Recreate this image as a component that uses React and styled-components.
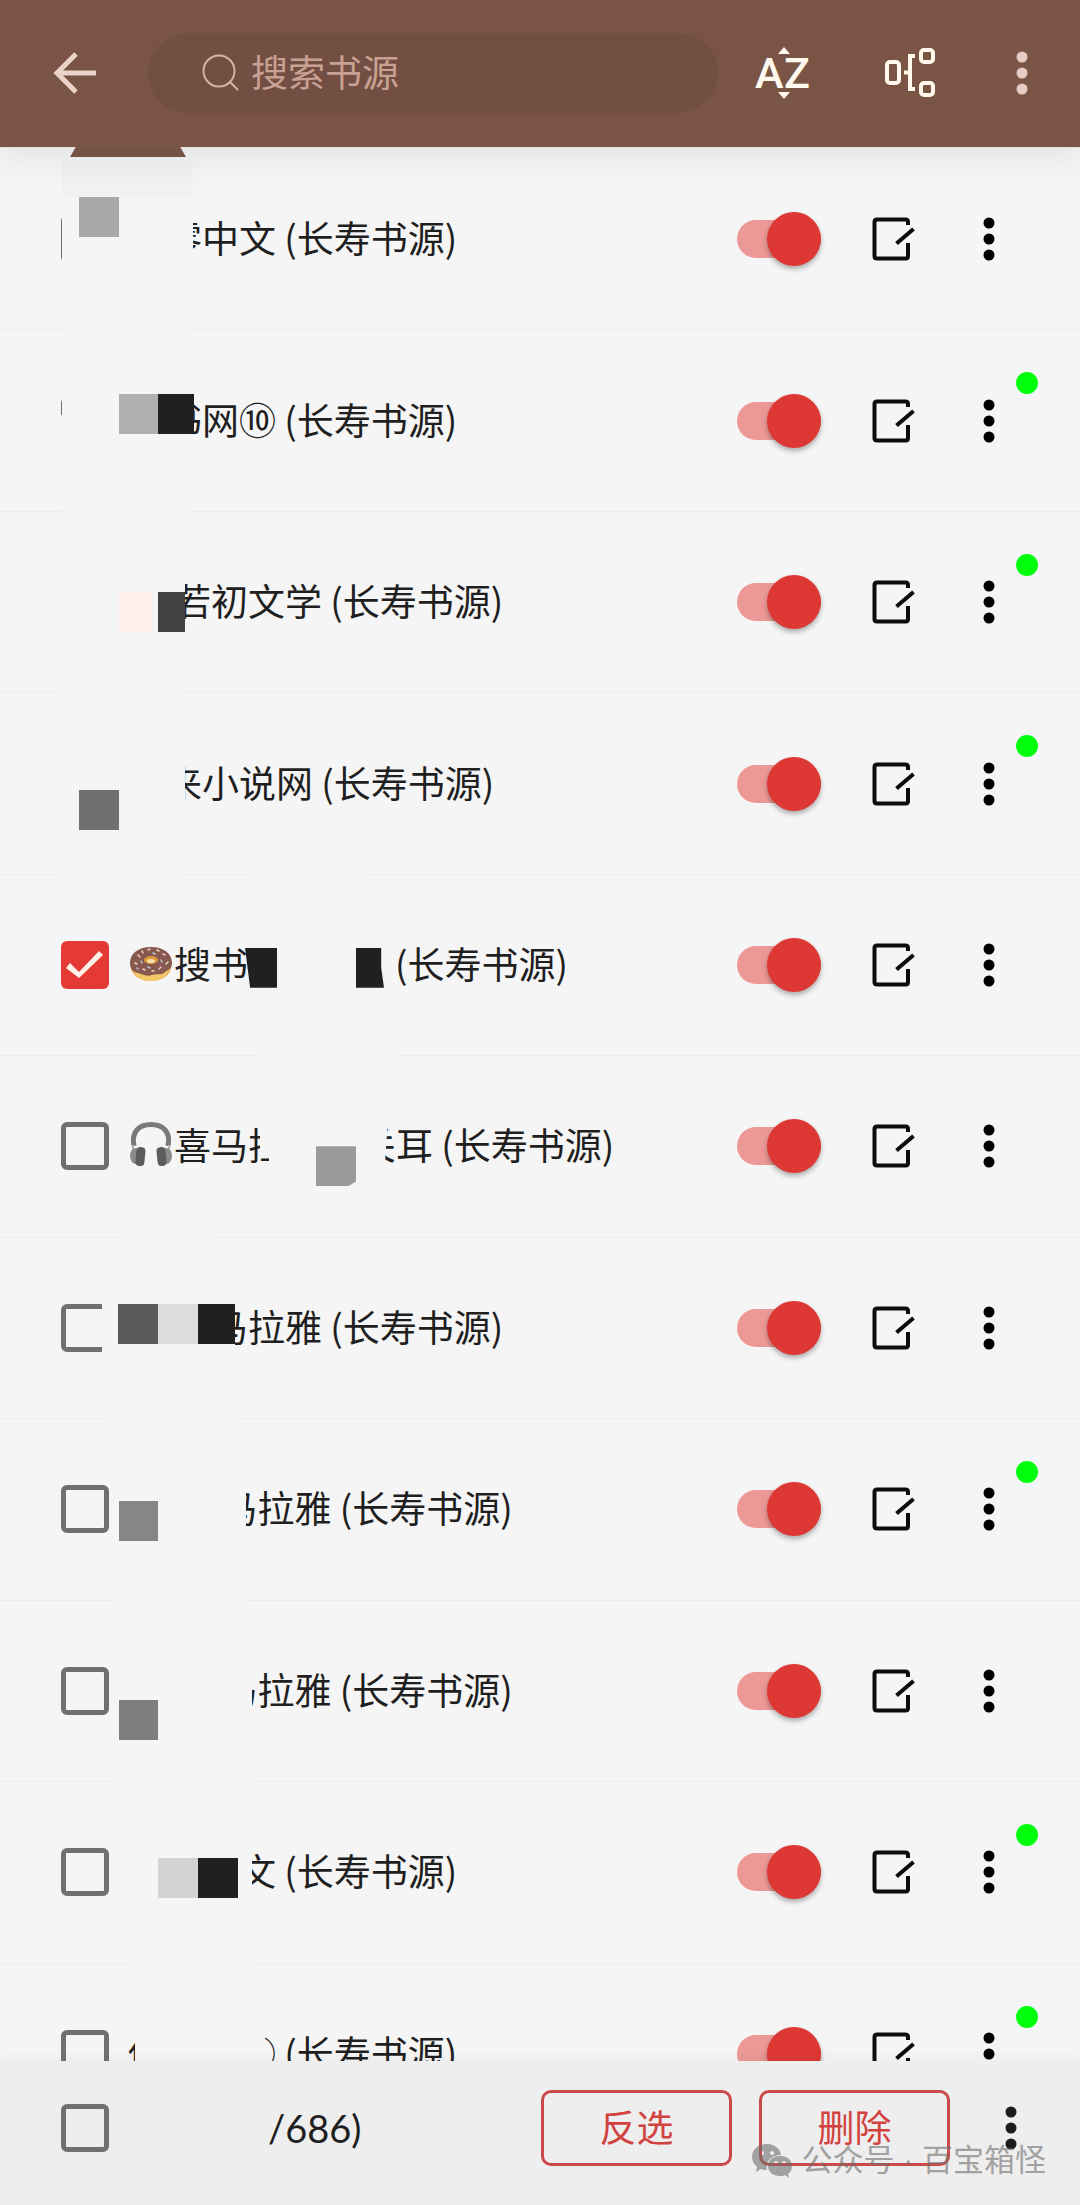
import React from "react";
import styled, { createGlobalStyle } from "styled-components";

const SUFFIX = " (长寿书源)";

// Masked characters are kept as blank spaces so the rest of the name keeps its place.
const sources = [
  {
    id: 1,
    name: "\u3000零中文",
    covers: [
      { x: 62, y: 11, w: 131, h: 37, color: "#f1f1f0" },
      { x: 62, y: 48, w: 131, h: 133 },
      { x: 79, y: 48, w: 40, h: 40, color: "#a9a9a9" },
    ],
  },
  {
    id: 2,
    name: "\u3000书网⑩",
    online: true,
    covers: [
      { x: 62, y: 1, w: 131, h: 181 },
      { x: 60, y: 85, w: 4, h: 40 },
      { x: 119, y: 64, w: 39, h: 40, color: "#b0b0b0" },
      { x: 158, y: 64, w: 36, h: 40, color: "#202020" },
    ],
  },
  {
    id: 3,
    icon: "blank",
    name: "若初文学",
    online: true,
    covers: [
      { x: 57, y: 1, w: 128, h: 181 },
      { x: 119, y: 80, w: 34, h: 40, color: "#fff0ea" },
      { x: 158, y: 80, w: 27, h: 40, color: "#444142" },
    ],
  },
  {
    id: 4,
    name: "\u3000来小说网",
    online: true,
    covers: [
      { x: 57, y: 1, w: 128, h: 181 },
      { x: 79, y: 97, w: 40, h: 40, color: "#707070" },
      { x: 253, y: 170, w: 116, h: 12 },
    ],
  },
  {
    id: 5,
    icon: "donut",
    name: "搜书\u3000\u3000\u3000\u2002\u2005",
    checked: true,
    covers: [
      { x: 256, y: 170, w: 144, h: 12 },
      { x: 245, y: 73, w: 32, h: 40, color: "#202020", clip: "0 0, 100% 0, 100% 100%, 16% 100%" },
      { x: 356, y: 73, w: 28, h: 40, color: "#202020", clip: "0 0, 90% 0, 90% 50%, 100% 100%, 0 100%" },
    ],
  },
  {
    id: 6,
    icon: "headphones",
    name: "喜马拉\u3000\u3000关耳",
    covers: [
      { x: 260, y: 50, w: 129, h: 90, clip: "0 0, 100% 0, 95% 100%, 7% 100%, 7% 56%, 0 56%" },
      { x: 316, y: 90, w: 40, h: 40, color: "#9a9a9a", clip: "0 0, 100% 0, 100% 88%, 80% 100%, 0 100%" },
      { x: 123, y: 170, w: 92, h: 12 },
    ],
  },
  {
    id: 7,
    icon: "blank",
    name: "喜马拉雅",
    covers: [
      { x: 102, y: 1, w: 133, h: 181 },
      { x: 118, y: 66, w: 40, h: 40, color: "#5a5a5a" },
      { x: 158, y: 66, w: 40, h: 40, color: "#dcdcdc" },
      { x: 198, y: 66, w: 37, h: 40, color: "#202020" },
    ],
  },
  {
    id: 8,
    name: "\u3000\u2002喜马拉雅",
    online: true,
    covers: [
      { x: 111, y: 1, w: 135, h: 181 },
      { x: 119, y: 82, w: 39, h: 40, color: "#868686" },
    ],
  },
  {
    id: 9,
    name: "\u3000\u2002喜马拉雅",
    covers: [
      { x: 112, y: 1, w: 140, h: 181 },
      { x: 119, y: 99, w: 39, h: 40, color: "#7e7e7e" },
    ],
  },
  {
    id: 10,
    name: "\u3000\u3000\u3000文",
    online: true,
    covers: [
      { x: 127, y: 1, w: 125, h: 181 },
      { x: 158, y: 76, w: 40, h: 40, color: "#d3d3d3" },
      { x: 198, y: 76, w: 40, h: 40, color: "#202020" },
    ],
  },
  {
    id: 11,
    name: "他\u3000\u3000①",
    online: true,
    covers: [{ x: 135, y: 1, w: 130, h: 97 }],
  },
];

const BackIcon = () => (
  <svg width="64" height="64" viewBox="0 0 64 64" fill="none" stroke="#ecd3c9" strokeWidth="5">
    <path d="M33 13 L14 32 L33 51 M14 32 H53" />
  </svg>
);

const SearchIcon = () => (
  <svg width="38" height="38" viewBox="0 0 38 38" fill="none" stroke="#d8b3a5" strokeWidth="2">
    <circle cx="17" cy="17" r="15.5" />
    <path d="M28 28 L36 36" />
  </svg>
);

const SortIcon = () => (
  <svg width="64" height="64" viewBox="0 0 64 64" fill="#fff9ee">
    <text x="5" y="47" fontFamily="Roboto, sans-serif" fontSize="43" fontWeight="500">
      A
    </text>
    <text x="34" y="47" fontFamily="Roboto, sans-serif" fontSize="43" fontWeight="500">
      Z
    </text>
    <path d="M28 13 L34 6 L40 13 Z M28 51 L34 58 L40 51 Z" />
  </svg>
);

const GroupIcon = () => (
  <svg width="64" height="64" viewBox="0 0 64 64" fill="none" stroke="#fff9ee" strokeWidth="4">
    <rect x="9" y="21" width="12" height="21" rx="3" />
    <path d="M26 31.5 H32 M37 15 H32 V48 H37" />
    <rect x="43" y="9" width="12" height="12" rx="3" />
    <rect x="43" y="42" width="12" height="12" rx="3" />
  </svg>
);

const MoreIcon = () => (
  <svg width="48" height="48" viewBox="0 0 48 48" fill="currentColor">
    <circle cx="24" cy="8" r="5.5" />
    <circle cx="24" cy="24" r="5.5" />
    <circle cx="24" cy="40" r="5.5" />
  </svg>
);

const EditIcon = () => (
  <svg width="48" height="48" viewBox="0 0 48 48" fill="none" stroke="#0c0c0c" strokeWidth="4">
    <path d="M39 10 V7 Q39 4.500 36.500 4.500 H8 Q5.500 4.500 5.500 7 V41 Q5.500 43.500 8 43.500 H36.500 Q39 43.500 39 41 V28" />
    <path d="M27.500 28.500 L44.500 14" />
  </svg>
);

const DonutIcon = () => (
  <svg width="46" height="46" viewBox="0 0 46 46">
    <ellipse cx="23" cy="27" rx="20" ry="14" fill="#e9b04c" />
    <ellipse cx="23" cy="30" rx="17" ry="11" fill="#f3c868" />
    <path
      d="M2 23 C2 13 11 7 23 7 S44 13 44 23 C44 29 40 30 37 32 C33 36 29 33 24 35 C18 37 14 34 10 33 C5 32 2 29 2 23 Z"
      fill="#87594e"
    />
    <ellipse cx="23" cy="20" rx="7" ry="4" fill="#dc9a3c" />
    <ellipse cx="23" cy="21" rx="4" ry="2" fill="#f4dfae" />
    <g strokeWidth="1.5" strokeLinecap="round">
      <path d="M10 15 l2 2 M20 10 l2 -1 M35 14 l2 1 M15 29 l2 1 M31 29 l2 -2" stroke="#f2c4cf" />
      <path d="M14 11 l1 2 M29 10 l2 1 M7 23 l2 1 M38 24 l2 -2 M24 31 l2 0" stroke="#e8dcc4" />
      <path d="M13 21 l1 2 M33 20 l1 2 M25 13 l2 1 M20 27 l2 1 M9 28 l1 1" stroke="#b4c7d8" />
    </g>
  </svg>
);

const HeadphonesIcon = () => (
  <svg width="46" height="46" viewBox="0 0 46 46" fill="none">
    <path d="M6 25 C3 11 11 3.500 23 3.500 S43 11 40 25" stroke="#7a7a7a" strokeWidth="5" />
    <path d="M5 24 V34 M41 24 V34" stroke="#b5b5b5" strokeWidth="2" />
    <ellipse cx="8" cy="35" rx="6" ry="8" fill="#8a8a8a" />
    <ellipse cx="38" cy="35" rx="6" ry="8" fill="#8a8a8a" />
    <rect x="8" y="26" width="9" height="19" rx="4" fill="#5c5c5c" transform="rotate(6 12 35)" />
    <rect x="29" y="26" width="9" height="19" rx="4" fill="#5c5c5c" transform="rotate(-6 34 35)" />
  </svg>
);

const WechatIcon = () => (
  <svg width="42" height="36" viewBox="0 0 42 36">
    <path
      fill="#6e6e6e"
      fillRule="evenodd"
      d="M16 1 C7 1 1 7 1 14 C1 18 3 21 6 24 L5 29 L10 26 C12 27 14 27 16 27 C14 19 20 12 30 12 C29 5 23 1 16 1 Z M11 8 a2 2 0 1 0 .1 0 Z M21 8 a2 2 0 1 0 .1 0 Z"
    />
    <path
      fill="#6e6e6e"
      fillRule="evenodd"
      d="M29 13 C22 13 17 17 17 23 C17 29 22 33 29 33 C31 33 33 33 34 32 L38 35 L37 31 C40 29 41 26 41 23 C41 17 36 13 29 13 Z M25 18 a2 2 0 1 0 .1 0 Z M33 18 a2 2 0 1 0 .1 0 Z"
    />
  </svg>
);

const nameIcons = {
  donut: <DonutIcon />,
  headphones: <HeadphonesIcon />,
  blank: null,
};

const SourceRow = ({ source }) => (
  <Row>
    <CheckBox id={`source-${source.id}`} defaultChecked={source.checked} />
    <Name htmlFor={`source-${source.id}`}>
      {source.icon && <NameIcon>{nameIcons[source.icon]}</NameIcon>}
      {source.name}
      {SUFFIX}
    </Name>
    <Actions>
      <Switch defaultChecked aria-label="启用" />
      <IconButton aria-label="编辑">
        <EditIcon />
      </IconButton>
      <IconButton aria-label="更多">
        <MoreIcon />
      </IconButton>
    </Actions>
    {source.online && <OnlineDot />}
    {source.covers.map((cover, index) => (
      <Cover
        key={index}
        $x={cover.x}
        $y={cover.y}
        $w={cover.w}
        $h={cover.h}
        $color={cover.color}
        $clip={cover.clip}
      />
    ))}
  </Row>
);

const App = () => {
  return (
    <Page>
      <GlobalStyle />
      <Header>
        <IconButton $large aria-label="返回">
          <BackIcon />
        </IconButton>
        <SearchBar>
          <SearchIcon />
          <SearchInput type="text" placeholder="搜索书源" aria-label="搜索书源" />
        </SearchBar>
        <HeaderActions>
          <IconButton $large aria-label="排序">
            <SortIcon />
          </IconButton>
          <IconButton $large aria-label="分组">
            <GroupIcon />
          </IconButton>
        </HeaderActions>
        <IconButton $large $color="#e5cbc3" aria-label="更多">
          <MoreIcon />
        </IconButton>
        <HeaderTab />
      </Header>
      <ListArea>
        <List>
          {sources.map((source) => (
            <SourceRow key={source.id} source={source} />
          ))}
        </List>
      </ListArea>
      <Footer>
        <CheckBox id="select-all" />
        <Count htmlFor="select-all">/686)</Count>
        <FooterActions>
          <OutlineButton>反选</OutlineButton>
          <OutlineButton>删除</OutlineButton>
        </FooterActions>
        <IconButton $color="#1c1c1c" aria-label="更多">
          <MoreIcon />
        </IconButton>
        <Watermark>
          <WechatIcon />
          <span>公众号 · 百宝箱怪</span>
        </Watermark>
      </Footer>
    </Page>
  );
};

const GlobalStyle = createGlobalStyle`
  * {
    box-sizing: border-box;
  }

  body {
    margin: 0;
    background: #f5f5f5;
    color: #1f1f1f;
    font-family: "Noto Sans CJK SC", sans-serif;
    font-size: 37px;
  }

  button,
  input {
    margin: 0;
    padding: 0;
    font: inherit;
  }
`;

const Page = styled.div`
  display: flex;
  flex-direction: column;
  height: 100vh;
`;

const Header = styled.header`
  position: relative;
  z-index: 1;
  flex: none;
  display: flex;
  align-items: center;
  height: 148px;
  padding: 0 26px 2px 43px;
  background: #7a5546;
  border-bottom: 1px solid #ecdcd6;
  box-shadow: 0 4px 36px rgba(40, 60, 70, 0.12);
`;

const HeaderTab = styled.div`
  position: absolute;
  top: 147px;
  left: 70px;
  width: 116px;
  height: 10px;
  background: #755244;
  clip-path: polygon(5% 0, 95% 0, 100% 100%, 0 100%);
`;

const SearchBar = styled.div`
  flex: 1;
  min-width: 0;
  display: flex;
  align-items: center;
  gap: 11px;
  height: 80px;
  margin: 0 32px 0 41px;
  padding: 0 54px;
  border-radius: 40px;
  background: #724f42;
`;

const SearchInput = styled.input`
  flex: 1;
  min-width: 0;
  padding-bottom: 4px;
  border: none;
  outline: none;
  background: none;
  color: #d8b3a5;

  &::placeholder {
    color: #c9a193;
    opacity: 1;
  }
`;

const HeaderActions = styled.div`
  display: flex;
  gap: 64px;
  margin-right: 48px;
`;

const IconButton = styled.button`
  flex: none;
  display: flex;
  align-items: center;
  justify-content: center;
  width: ${({ $large }) => ($large ? 64 : 48)}px;
  height: ${({ $large }) => ($large ? 64 : 48)}px;
  border: none;
  background: none;
  color: ${({ $color }) => $color || "#000"};
  cursor: pointer;
`;

const ListArea = styled.main`
  flex: 1;
  min-height: 0;
  overflow: hidden;
`;

const List = styled.ul`
  display: grid;
  grid-auto-rows: 1fr;
  min-height: 1997px;
  margin: 0;
  padding: 1px 0 0;
  list-style: none;
`;

const Row = styled.li`
  position: relative;
  display: flex;
  align-items: center;
  padding: 0 67px 0 61px;
  border-bottom: 1px solid #ececec;
`;

const CheckBox = styled.input.attrs({ type: "checkbox" })`
  flex: none;
  appearance: none;
  width: 48px;
  height: 48px;
  border: 5px solid #707070;
  border-radius: 6px;

  &:checked {
    border: none;
    background: #e53935;
  }

  &:checked::after {
    content: "";
    display: block;
    height: 48px;
    background: #fff0e8;
    clip-path: polygon(5px 27px, 9px 22px, 18px 31px, 38px 10px, 42px 14px, 18px 37px);
  }
`;

const Name = styled.label`
  flex: 1;
  display: flex;
  align-items: center;
  margin-left: 19px;
  padding-bottom: 4px;
  white-space: pre;
`;

const NameIcon = styled.span`
  display: flex;
  width: 46px;
  height: 46px;
`;

const Actions = styled.div`
  display: flex;
  align-items: center;
  gap: 48px;
`;

const Switch = styled.input.attrs({ type: "checkbox", role: "switch" })`
  appearance: none;
  display: flex;
  align-items: center;
  width: 84px;
  height: 38px;
  border-radius: 19px;
  background: #ec9896;

  &::after {
    content: "";
    flex: none;
    width: 54px;
    height: 54px;
    border-radius: 50%;
    background: #de3835;
    box-shadow: 0 3px 5px rgba(0, 0, 0, 0.3);
  }

  &:checked::after {
    margin-left: auto;
  }
`;

const OnlineDot = styled.span`
  position: absolute;
  top: 42px;
  right: 42px;
  width: 22px;
  height: 22px;
  border-radius: 50%;
  background: #00ff0c;
`;

const Cover = styled.span`
  position: absolute;
  left: ${({ $x }) => $x}px;
  top: ${({ $y }) => $y}px;
  width: ${({ $w }) => $w}px;
  height: ${({ $h }) => $h}px;
  background: ${({ $color }) => $color || "#f5f5f5"};
  clip-path: ${({ $clip }) => ($clip ? `polygon(${$clip})` : "none")};
`;

const Footer = styled.footer`
  position: relative;
  flex: none;
  display: flex;
  align-items: center;
  height: 144px;
  padding: 0 45px 10px 61px;
  background: #eeeeee;
  box-shadow: 0 -2px 14px rgba(0, 0, 0, 0.05);
`;

const Count = styled.label`
  flex: 1;
  padding-left: 159px;
  font-family: Lato, "Noto Sans CJK SC", sans-serif;
  font-size: 38px;
`;

const FooterActions = styled.div`
  display: flex;
  gap: 27px;
  margin-right: 37px;
`;

const OutlineButton = styled.button`
  width: 191px;
  height: 76px;
  padding-bottom: 4px;
  border: 3px solid #c94a48;
  border-radius: 10px;
  background: none;
  color: #d2423f;
  cursor: pointer;
`;

const Watermark = styled.div`
  position: absolute;
  right: 34px;
  bottom: 24px;
  display: flex;
  align-items: center;
  gap: 8px;
  color: #6e6e6e;
  font-family: "Liberation Sans", "Noto Sans CJK SC", sans-serif;
  font-size: 31px;
  line-height: 40px;
  opacity: 0.6;
  pointer-events: none;
`;

export default App;
